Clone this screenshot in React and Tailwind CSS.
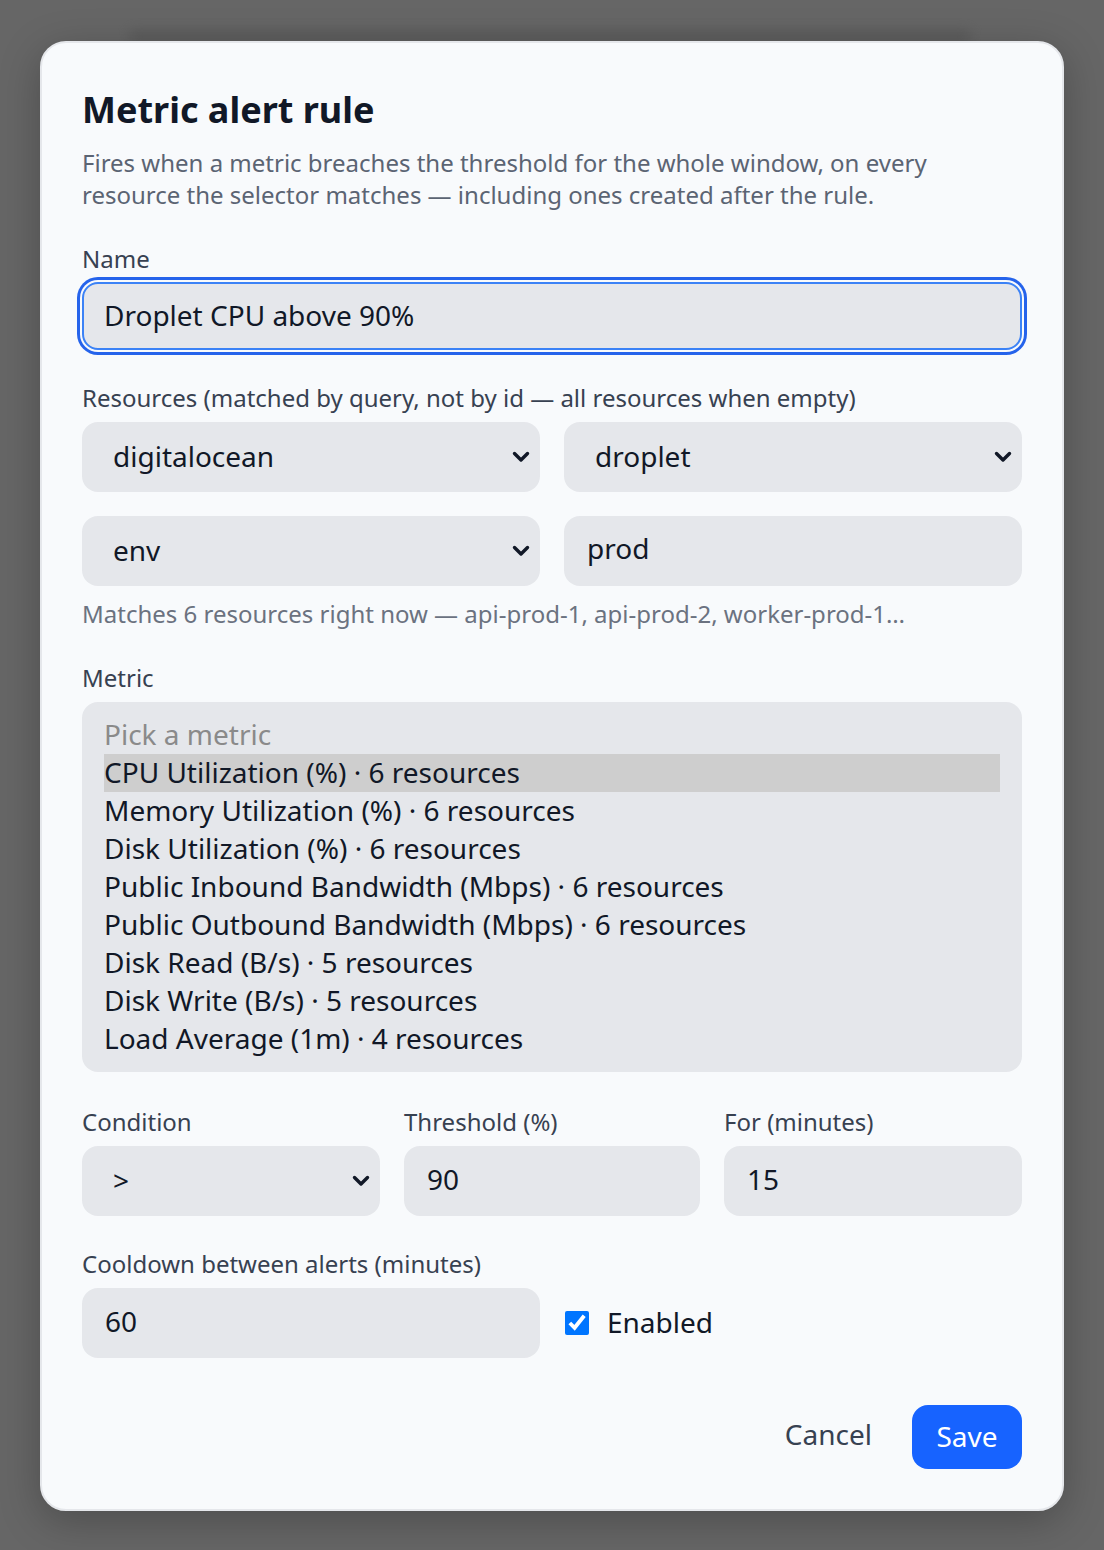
import React from "react";

function Chevron() {
  return (
    <svg width="18" height="12" viewBox="0 0 18 12" className="shrink-0">
      <polyline points="2.5,2.5 9,9 15.5,2.5" fill="none" stroke="#111827" strokeWidth="3.4" strokeLinecap="round" strokeLinejoin="round" />
    </svg>
  );
}

function Select({ value, className = "" }) {
  return (
    <div className={"h-[70px] rounded-[16px] bg-[#e5e7eb] flex items-center justify-between pl-[31px] pr-[10px] text-[28px] text-[#111827] " + className}>
      <span className="-mt-[2px]">{value}</span>
      <Chevron />
    </div>
  );
}

function Input({ value, className = "" }) {
  return (
    <div className={"h-[70px] rounded-[16px] bg-[#e5e7eb] flex items-center pl-[23px] text-[28px] text-[#111827] " + className}>
      <span>{value}</span>
    </div>
  );
}

function Label({ children, className = "" }) {
  return <div className={"text-[24px] leading-[32px] text-[#374151] " + className}>{children}</div>;
}

const options = [
  "CPU Utilization (%) · 6 resources",
  "Memory Utilization (%) · 6 resources",
  "Disk Utilization (%) · 6 resources",
  "Public Inbound Bandwidth (Mbps) · 6 resources",
  "Public Outbound Bandwidth (Mbps) · 6 resources",
  "Disk Read (B/s) · 5 resources",
  "Disk Write (B/s) · 5 resources",
  "Load Average (1m) · 4 resources",
];

export default function App() {
  return (
    <div className="relative min-h-[1550px] bg-[#666666] pt-[41px] pl-[40px] font-['Noto_Sans',sans-serif] overflow-hidden">
      <div className="absolute left-[130px] top-[30px] w-[840px] h-[14px] bg-[#555] blur-[6px] opacity-60" />
      <div className="relative w-[1024px] bg-[#f8fafc] border-2 border-[#e5e7eb] rounded-[26px] px-10 pt-[47px] pb-[40px] shadow-[0_10px_40px_rgba(0,0,0,0.25)]">
        <h1 className="text-[36px] leading-[40px] font-bold text-[#111827]">Metric alert rule</h1>
        <p className="mt-[17px] text-[24px] leading-[32px] text-[#5b6473]">
          Fires when a metric breaches the threshold for the whole window, on every resource the selector matches — including ones created after the rule.
        </p>

        <Label className="mt-[32px]">Name</Label>
        <div className="mt-[7px] h-[68px] rounded-[16px] bg-[#e5e7eb] border-2 border-[#3b82f6] ring-[3px] ring-[#2563eb] ring-offset-2 ring-offset-[#f8fafc] flex items-center pl-[20px] pb-[3px] text-[28px] text-[#111827]">
          Droplet CPU above 90%
        </div>

        <Label className="mt-[32px]">Resources (matched by query, not by id — all resources when empty)</Label>
        <div className="mt-[8px] grid grid-cols-2 gap-6">
          <Select value="digitalocean" />
          <Select value="droplet" />
          <Select value="env" />
          <Input value="prod" className="items-start pt-[11px]" />
        </div>
        <div className="mt-[12px] text-[24px] leading-[32px] text-[#6b7280]">
          Matches 6 resources right now — api-prod-1, api-prod-2, worker-prod-1…
        </div>

        <Label className="mt-[32px]">Metric</Label>
        <div className="mt-[8px] rounded-[16px] bg-[#e5e7eb] px-[22px] py-[14px] text-[28px] text-[#111827]">
          <div className="h-[38px] leading-[36px] text-[#8a8a8a]">Pick a metric</div>
          {options.map((o, i) => (
            <div key={o} className={"h-[38px] leading-[36px] " + (i === 0 ? "bg-[#cecece]" : "")}>
              {o}
            </div>
          ))}
        </div>

        <div className="mt-[34px] grid grid-cols-[298px_1fr_298px] gap-6">
          <div>
            <Label>Condition</Label>
            <Select value=">" className="mt-[8px]" />
          </div>
          <div>
            <Label>Threshold (%)</Label>
            <Input value="90" className="mt-[8px] h-[68px] pl-[22px] pb-[4px]" />
          </div>
          <div>
            <Label>For (minutes)</Label>
            <Input value="15" className="mt-[8px] h-[68px] pl-[22px] pb-[4px]" />
          </div>
        </div>

        <Label className="mt-[32px]">Cooldown between alerts (minutes)</Label>
        <div className="mt-[8px] grid grid-cols-2 gap-6">
          <Input value="60" className="h-[68px] pl-[22px] pb-[5px]" />
          <label className="flex items-center gap-[18px] text-[28px] text-[#111827]">
            <input type="checkbox" defaultChecked className="w-[24px] h-[24px] accent-[#0075ff] ml-[1px]" />
            <span className="-mt-[2px]">Enabled</span>
          </label>
        </div>

        <div className="mt-[47px] flex justify-end items-center gap-[40px]">
          <button className="text-[28px] text-[#374151] -mt-[6px]">Cancel</button>
          <button className="h-[64px] w-[110px] rounded-[16px] bg-[#1763ff] text-white text-[28px] pb-[3px]">Save</button>
        </div>
      </div>
    </div>
  );
}
